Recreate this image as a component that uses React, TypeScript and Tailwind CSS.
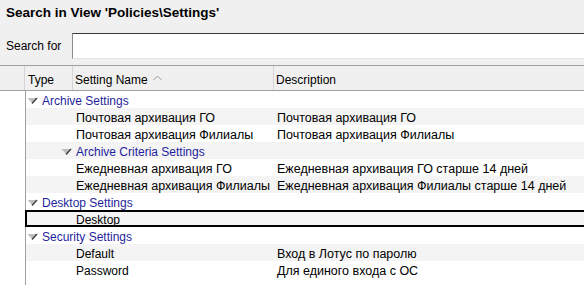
import React from "react";

type Row =
  | { kind: "group"; label: string; indent: number }
  | { kind: "item"; name: string; desc: string; selected?: boolean; cyr?: boolean };

const rows: Row[] = [
  { kind: "group", label: "Archive Settings", indent: 0 },
  { kind: "item", name: "Почтовая архивация ГО", desc: "Почтовая архивация ГО", cyr: true },
  { kind: "item", name: "Почтовая архивация Филиалы", desc: "Почтовая архивация Филиалы", cyr: true },
  { kind: "group", label: "Archive Criteria Settings", indent: 1 },
  { kind: "item", name: "Ежедневная архивация ГО", desc: "Ежедневная архивация ГО старше 14 дней", cyr: true },
  { kind: "item", name: "Ежедневная архивация Филиалы", desc: "Ежедневная архивация Филиалы старше 14 дней", cyr: true },
  { kind: "group", label: "Desktop Settings", indent: 0 },
  { kind: "item", name: "Desktop", desc: "", selected: true },
  { kind: "group", label: "Security Settings", indent: 0 },
  { kind: "item", name: "Default", desc: "Вход в Лотус по паролю" },
  { kind: "item", name: "Password", desc: "Для единого входа с ОС" },
];

function Expander() {
  return (
    <svg width="11" height="8" viewBox="0 0 11 8" className="shrink-0">
      <polygon points="0.5,1 10,1 5.5,6.5" fill="#bdbdbd" />
      <line x1="5" y1="6.5" x2="10" y2="1" stroke="#3c3c3c" strokeWidth="1.3" />
    </svg>
  );
}

export default function App() {
  return (
    <div
      className="w-[584px] h-[285px] overflow-hidden bg-[#f0f0f0] text-[12px] text-black flex flex-col"
      style={{ fontFamily: '"Liberation Sans", Arial, sans-serif' }}
    >
      <div className="h-[33px] pl-[6px] pt-[5px] font-bold text-[13.5px] leading-[16px]">
        Search in View 'Policies\Settings'
      </div>
      <div className="flex h-[26px] items-center">
        <div className="w-[72px] pl-[6px] leading-[14px]">Search for</div>
        <div className="flex-1 h-[26px] bg-white border-t border-t-[#3a3a3a] border-l border-l-[#8a8a8a] border-b border-b-[#e3e3e3]" />
      </div>
      <div className="h-[6px]" />
      <div className="flex h-[26px] border-t border-t-[#a0a0a0] border-b border-b-[#a0a0a0] bg-[#f0f0f0] leading-[14px] items-stretch">
        <div className="w-[25px] border-r border-r-[#d5d5d5]" />
        <div className="w-[48px] pl-[3px] pt-[3px] flex items-center border-r border-r-[#d5d5d5]">Type</div>
        <div className="w-[201px] pl-[2px] pt-[3px] flex items-center border-r border-r-[#d5d5d5]">
          Setting Name
          <svg width="9" height="6" viewBox="0 0 9 6" className="ml-[5px] mb-[3px]">
            <polyline points="0.5,5 4.5,1 8.5,5" fill="none" stroke="#9a9a9a" strokeWidth="1" />
          </svg>
        </div>
        <div className="flex-1 pl-[2px] pt-[3px] flex items-center">Description</div>
      </div>
      <div className="flex flex-1 bg-white">
        <div className="w-[26px] border-r border-r-[#a0a0a0] shrink-0" />
        <div className="flex-1 flex flex-col">
          {rows.map((r, i) => {
            const bg = i % 2 === 1 ? "bg-[#f4f4f4]" : "bg-white";
            if (r.kind === "group") {
              return (
                <div
                  key={i}
                  className={`h-[17px] flex items-center pt-[3px] leading-[14px] text-[#1f1f9e] ${bg} ${
                    r.indent === 1 ? "pl-[35px]" : "pl-[1px]"
                  }`}
                >
                  <Expander />
                  <span className="ml-[4px]">{r.label}</span>
                </div>
              );
            }
            return (
              <div
                key={i}
                className={`h-[17px] flex items-center leading-[14px] whitespace-nowrap ${bg} ${
                  r.selected ? "border-2 border-black -ml-[1px] mr-[-4px] pt-[3px]" : "pt-[3px]"
                }`}
              >
                <div className={`${r.selected ? "w-[49px]" : "w-[50px]"} shrink-0`} />
                <div className={`w-[201px] shrink-0 ${r.cyr ? "text-[12.5px]" : ""}`}>{r.name}</div>
                <div className="flex-1 text-[12.5px]">{r.desc}</div>
              </div>
            );
          })}
        </div>
      </div>
    </div>
  );
}
